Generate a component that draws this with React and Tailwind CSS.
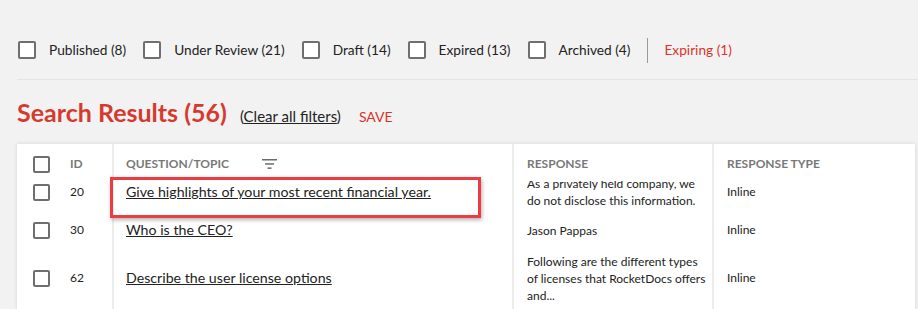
import React from 'react';

const filters = [
  { label: 'Published (8)' },
  { label: 'Under Review (21)' },
  { label: 'Draft (14)' },
  { label: 'Expired (13)' },
  { label: 'Archived (4)' },
];

const rows = [
  {
    id: '20',
    question: 'Give highlights of your most recent financial year.',
    response: ['As a privately held company, we', 'do not disclose this information.'],
    type: 'Inline',
    height: 'h-[38px]',
    pad: 'pb-[6px]',
    highlight: true,
    clip: true,
  },
  {
    id: '30',
    question: 'Who is the CEO?',
    response: ['Jason Pappas'],
    type: 'Inline',
    height: 'h-[32px]',
    pad: '',
  },
  {
    id: '62',
    question: 'Describe the user license options',
    response: ['Following are the different types', 'of licenses that RocketDocs offers', 'and...'],
    type: 'Inline',
    height: 'h-[64px]',
    pad: '',
  },
];

const Box = ({ size = 'w-[18px] h-[18px]' }) => (
  <span className={`${size} shrink-0 rounded-[2px] border-2 border-[#6f6f6f] bg-white`} />
);

const FilterIcon = () => (
  <svg width="15" height="12" viewBox="0 0 15 12" className="ml-[33px]">
    <rect x="0" y="1" width="15" height="1.5" fill="#6b6b6b" />
    <rect x="3" y="5.2" width="9" height="1.5" fill="#6b6b6b" />
    <rect x="5.5" y="9.4" width="4" height="1.5" fill="#6b6b6b" />
  </svg>
);

export default function App() {
  return (
    <div
      className="w-[918px] h-[309px] overflow-hidden bg-[#f2f2f2] text-[#222]"
      style={{ fontFamily: 'Lato, "Noto Sans", sans-serif' }}
    >
      {/* status filters */}
      <div className="ml-[17px] pl-[1px] pt-[41px] pb-[20px] h-[80px] flex items-center border-b border-[#e4e4e4]">
        {filters.map((f, i) => (
          <label key={i} className="flex items-center mr-[17px]">
            <Box />
            <span className="ml-[13px] text-[13.7px]">{f.label}</span>
          </label>
        ))}
        <span className="w-px h-[25px] bg-[#9a9a9a] mr-[16px]" />
        <span className="text-[13.7px] text-[#d9342b]">Expiring (1)</span>
      </div>

      {/* heading */}
      <div className="flex items-baseline pl-[17px] pt-[20px] h-[64px]">
        <h1 className="text-[25px] font-bold text-[#d63a2f] leading-none">Search Results (56)</h1>
        <a className="ml-[13px] text-[15px]">
          (<span className="underline">Clear all filters</span>)
        </a>
        <span className="ml-[18px] text-[14px] text-[#d9342b]">SAVE</span>
      </div>

      {/* results table */}
      <div className="ml-[17px] w-[898px] bg-white shadow-[0_0_4px_rgba(0,0,0,0.12)]">
        <div className="grid grid-cols-[97px_400px_200px_201px] h-[32px] text-[12px] font-bold text-[#787878] uppercase">
          <div className="flex items-center pt-[8px] pl-[16px] border-r-2 border-[#ececec]">
            <Box size="w-[17px] h-[17px]" />
            <span className="ml-[20px]">ID</span>
          </div>
          <div className="flex items-center pt-[8px] pl-[12px] border-r-2 border-[#ececec]">
            <span>Question/Topic</span>
            <FilterIcon />
          </div>
          <div className="flex items-center pt-[8px] pl-[13px] border-r-2 border-[#ececec]">Response</div>
          <div className="flex items-center pt-[8px] pl-[13px]">Response Type</div>
        </div>

        {rows.map((r) => (
          <div key={r.id} className={`grid grid-cols-[97px_400px_200px_201px] ${r.height} text-[12px]`}>
            <div className={`flex items-center ${r.pad} pl-[16px] border-r-2 border-[#ececec]`}>
              <Box size="w-[17px] h-[17px]" />
              <span className="ml-[20px]">{r.id}</span>
            </div>
            <div className={`relative flex items-center ${r.pad} pl-[12px] border-r-2 border-[#ececec]`}>
              <span className="underline text-[14.2px]">{r.question}</span>
              {r.highlight && (
                <span className="absolute left-[-4px] top-[1px] w-[371px] h-[41px] border-[3px] border-[#ee3b41] shadow-[1px_2px_4px_rgba(0,0,0,0.3)]" />
              )}
            </div>
            {r.clip ? (
              <div className="pl-[13px] pr-[6px] border-r-2 border-[#ececec]">
                <div className="mt-[5px] h-[28px] overflow-hidden flex flex-col justify-end leading-[17px]">
                  {r.response.map((line, i) => (
                    <span key={i} className="whitespace-nowrap">{line}</span>
                  ))}
                </div>
              </div>
            ) : (
              <div className="flex flex-col justify-center pl-[13px] pr-[6px] border-r-2 border-[#ececec] leading-[17px]">
                {r.response.map((line, i) => (
                  <span key={i} className="whitespace-nowrap">{line}</span>
                ))}
              </div>
            )}
            <div className={`flex items-center ${r.pad} pl-[13px]`}>{r.type}</div>
          </div>
        ))}
      </div>
    </div>
  );
}
